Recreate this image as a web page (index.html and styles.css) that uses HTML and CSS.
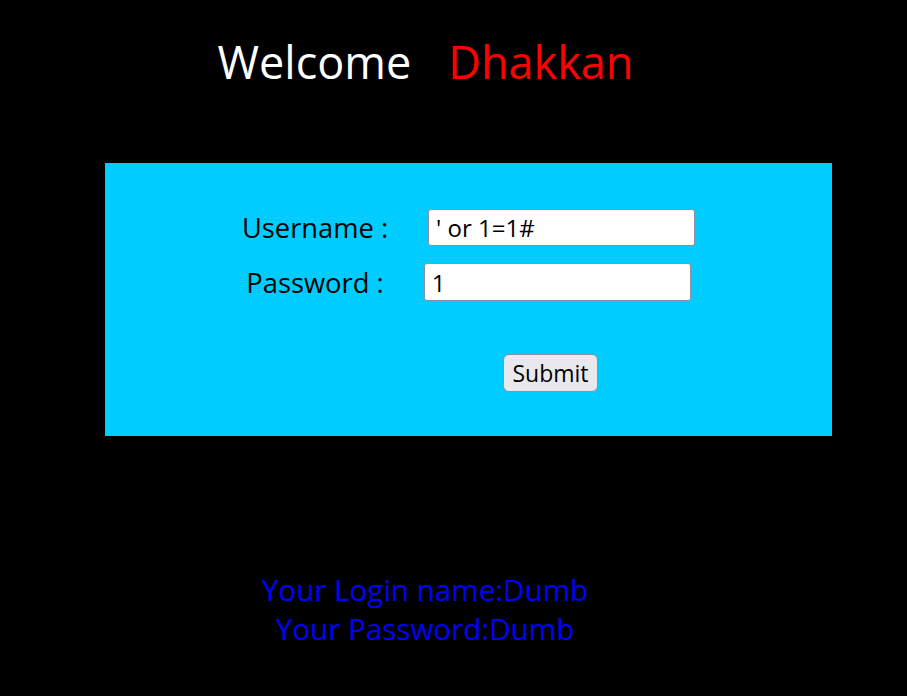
FILE: index.html
```html
<!DOCTYPE html>
<html>
<head>
<meta charset="utf-8">
<link rel="stylesheet" href="styles.css">
<title>Less</title>
</head>
<body>
<div class="page">
  <div class="welcome">Welcome<span class="name">Dhakkan</span></div>
  <form class="login" action="#" onsubmit="return false">
    <div class="row">
      <label class="lbl">Username :</label>
      <input class="field" type="text" value="' or 1=1#">
    </div>
    <div class="row row-pass">
      <label class="lbl">Password :</label>
      <input class="field" type="text" value="1">
    </div>
    <div class="submit-row">
      <button class="btn" type="submit">Submit</button>
    </div>
  </form>
  <div class="result">
    <div>Your Login name:Dumb</div>
    <div>Your Password:Dumb</div>
  </div>
</div>
</body>
</html>
```
FILE: styles.css
```css
html, body {
  margin: 0;
  padding: 0;
  background: #000;
  height: 100%;
}
body {
  font-family: "Open Sans", "Noto Sans", sans-serif;
}
.page {
  width: 907px;
  min-height: 696px;
  background: #000;
}
.welcome {
  width: 851px;
  text-align: center;
  color: #fff;
  font-size: 45px;
  line-height: 60px;
  padding-top: 32px;
}
.welcome .name {
  color: #ff0000;
  margin-left: 37px;
}
.login {
  margin: 71px 0 0 105px;
  width: 727px;
  height: 273px;
  background: #00ccff;
  box-sizing: border-box;
  padding-top: 46px;
  display: flex;
  flex-direction: column;
}
.row {
  display: flex;
  justify-content: center;
  align-items: center;
  gap: 40px;
  height: 37px;
}
.row-pass {
  margin-top: 17px;
  height: 38px;
}
.lbl {
  font-size: 27.3px;
  color: #000;
}
.field {
  width: 267px;
  height: 100%;
  box-sizing: border-box;
  border: 1px solid #8f8f9d;
  border-radius: 3px;
  background: #fff;
  padding: 0 7px;
  font-family: "Open Sans", "Noto Sans", sans-serif;
  font-size: 24px;
  color: #000;
  margin: 0;
}
.submit-row {
  margin-top: 53px;
  padding-left: 398px;
}
.btn {
  width: 95px;
  height: 38px;
  box-sizing: border-box;
  font-family: "Open Sans", "Noto Sans", sans-serif;
  font-size: 23px;
  color: #000;
  background: #e9e9ed;
  border: 1px solid #8f8f9d;
  border-radius: 6px;
  padding: 0;
  margin: 0;
}
.result {
  width: 850px;
  margin-top: 134px;
  text-align: center;
  color: #0000ff;
  font-size: 29.6px;
  line-height: 39px;
}
```
